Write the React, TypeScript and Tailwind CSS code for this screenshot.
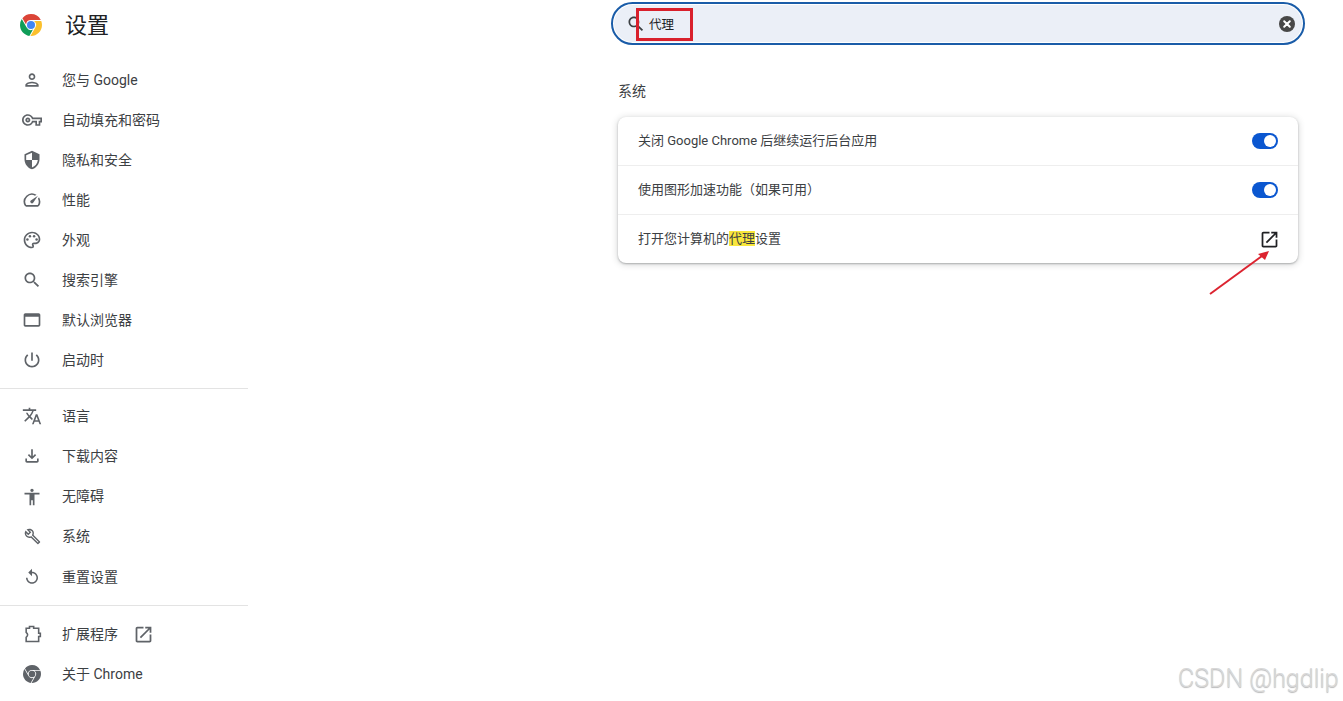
import React from "react";

type NavItem = {
  label: string;
  icon: React.ReactNode;
  external?: boolean;
};

const font = "font-['Roboto','Noto_Sans_CJK_SC',sans-serif]";

const CHROME_RED = "M12 0C8.21 0 4.831 1.757 2.632 4.501l3.953 6.848A5.454 5.454 0 0 1 12 6.545h10.691A12 12 0 0 0 12 0z";
const CHROME_GREEN = "M1.931 5.47A11.943 11.943 0 0 0 0 12c0 6.012 4.42 10.991 10.189 11.864l3.953-6.847a5.45 5.45 0 0 1-6.865-2.29z";
const CHROME_YELLOW = "M15.273 7.636a5.446 5.446 0 0 1 1.45 7.09l.002.001h-.002l-5.344 9.257c.206.01.413.016.621.016 6.627 0 12-5.373 12-12 0-1.54-.29-3.011-.818-4.364z";
const OPEN_NEW = "M19 19H5V5h7V3H5c-1.11 0-2 .9-2 2v14c0 1.1.89 2 2 2h14c1.1 0 2-.9 2-2v-7h-2v7zM14 3v2h3.59l-9.83 9.83 1.41 1.41L19 6.41V10h2V3h-7z";
const SEARCH = "M15.5 14h-.79l-.28-.27C15.41 12.59 16 11.11 16 9.5 16 5.91 13.09 3 9.5 3S3 5.91 3 9.5 5.91 16 9.5 16c1.61 0 3.09-.59 4.23-1.57l.27.28v.79l5 4.99L20.49 19l-4.99-5zm-6 0C7.01 14 5 11.99 5 9.5S7.01 5 9.5 5 14 7.01 14 9.5 11.99 14 9.5 14z";

const Icon = ({ d, className = "w-5 h-5 text-[#5f6368]", children }: { d?: string; className?: string; children?: React.ReactNode }) => (
  <svg viewBox="0 0 24 24" fill="currentColor" className={className}>
    {d && <path d={d} />}
    {children}
  </svg>
);

const topItems: NavItem[] = [
  { label: "您与 Google", icon: <Icon d="M12 6c1.1 0 2 .9 2 2s-.9 2-2 2-2-.9-2-2 .9-2 2-2m0 10c2.7 0 5.8 1.29 6 2H6c.23-.72 3.31-2 6-2m0-12C9.79 4 8 5.79 8 8s1.79 4 4 4 4-1.79 4-4-1.79-4-4-4zm0 10c-2.67 0-8 1.34-8 4v2h16v-2c0-2.66-5.33-4-8-4z" /> },
  { label: "自动填充和密码", icon: <Icon d="M22 19h-6v-4h-2.68c-1.14 2.42-3.6 4-6.32 4-3.86 0-7-3.14-7-7s3.14-7 7-7c2.72 0 5.17 1.58 6.32 4H24v6h-2v4zm-4-2h2v-4h2v-2H11.94l-.23-.67C11.01 8.34 9.11 7 7 7c-2.76 0-5 2.24-5 5s2.24 5 5 5c2.11 0 4.01-1.34 4.71-3.33l.23-.67H18v4zM7 15c-1.65 0-3-1.35-3-3s1.35-3 3-3 3 1.35 3 3-1.35 3-3 3zm0-4c-.55 0-1 .45-1 1s.45 1 1 1 1-.45 1-1-.45-1-1-1z" /> },
  { label: "隐私和安全", icon: <Icon d="M12 1L3 5v6c0 5.55 3.84 10.74 9 12 5.16-1.26 9-6.45 9-12V5l-9-4zm0 10.99h7c-.53 4.12-3.28 7.79-7 8.94V12H5V6.3l7-3.11v8.8z" /> },
  { label: "性能", icon: <Icon d="M20.38 8.57l-1.23 1.85a8 8 0 0 1-.22 7.58H5.07A8 8 0 0 1 15.58 6.85l1.85-1.23A10 10 0 0 0 3.35 19a2 2 0 0 0 1.72 1h13.85a2 2 0 0 0 1.74-1 10 10 0 0 0-.27-10.44zm-9.79 6.84a2 2 0 0 0 2.83 0l5.66-8.49-8.49 5.66a2 2 0 0 0 0 2.83z" /> },
  {
    label: "外观",
    icon: (
      <Icon d="M12 22C6.49 22 2 17.51 2 12S6.49 2 12 2s10 4.04 10 9c0 3.31-2.69 6-6 6h-1.77c-.28 0-.5.22-.5.5 0 .12.05.23.13.33.41.47.64 1.06.64 1.67A2.5 2.5 0 0 1 12 22zm0-18c-4.41 0-8 3.59-8 8s3.59 8 8 8c.28 0 .5-.22.5-.5a.54.54 0 0 0-.14-.35c-.41-.46-.63-1.05-.63-1.65a2.5 2.5 0 0 1 2.5-2.5H16c2.21 0 4-1.79 4-4 0-3.86-3.59-7-8-7z">
        <circle cx="6.5" cy="11.5" r="1.5" />
        <circle cx="9.5" cy="7.5" r="1.5" />
        <circle cx="14.5" cy="7.5" r="1.5" />
        <circle cx="17.5" cy="11.5" r="1.5" />
      </Icon>
    ),
  },
  { label: "搜索引擎", icon: <Icon d={SEARCH} /> },
  { label: "默认浏览器", icon: <Icon d="M20 4H4c-1.11 0-2 .9-2 2v12c0 1.1.89 2 2 2h16c1.1 0 2-.9 2-2V6c0-1.1-.89-2-2-2zm0 14H4V8h16v10z" /> },
  { label: "启动时", icon: <Icon d="M13 3h-2v10h2V3zm4.83 2.17l-1.42 1.42C17.99 7.86 19 9.81 19 12c0 3.87-3.13 7-7 7s-7-3.13-7-7c0-2.19 1.01-4.14 2.58-5.42L6.17 5.17C4.23 6.82 3 9.26 3 12c0 4.97 4.03 9 9 9s9-4.03 9-9c0-2.74-1.23-5.18-3.17-6.83z" /> },
];

const midItems: NavItem[] = [
  { label: "语言", icon: <Icon d="M12.87 15.07l-2.54-2.51.03-.03c1.74-1.94 2.98-4.17 3.71-6.53H17V4h-7V2H8v2H1v1.99h11.17C11.5 7.92 10.44 9.75 9 11.35 8.07 10.32 7.3 9.19 6.69 8h-2c.73 1.63 1.73 3.17 2.98 4.56l-5.09 5.02L4 19l5-5 3.11 3.11.76-2.04zM18.5 10h-2L12 22h2l1.12-3h4.75L21 22h2l-4.5-12zm-2.62 7l1.62-4.33L19.12 17h-3.24z" /> },
  { label: "下载内容", icon: <Icon d="M18 15v3H6v-3H4v3c0 1.1.9 2 2 2h12c1.1 0 2-.9 2-2v-3h-2zm-1-4l-1.41-1.41L13 12.17V4h-2v8.17L8.41 9.59 7 11l5 5 5-5z" /> },
  { label: "无障碍", icon: <Icon d="M12 2c1.1 0 2 .9 2 2s-.9 2-2 2-2-.9-2-2 .9-2 2-2zm9 7h-6v13h-2v-6h-2v6H9V9H3V7h18v2z" /> },
  { label: "系统", icon: <Icon className="w-[17px] h-[17px] text-[#5f6368]" d="M22.61 18.99l-9.08-9.08c.93-2.34.45-5.1-1.44-7C9.79.61 6.21.4 3.66 2.26L7.5 6.11 6.08 7.52 2.25 3.69C.39 6.23.6 9.82 2.9 12.11c1.86 1.86 4.57 2.35 6.89 1.48l9.11 9.11c.39.39 1.02.39 1.41 0l2.3-2.3c.4-.38.4-1.01 0-1.41zm-3 1.6l-9.46-9.46c-.61.45-1.29.72-2 .82-1.36.2-2.79-.21-3.83-1.25C3.37 9.76 2.93 8.5 3 7.26l3.09 3.09 4.24-4.24-3.09-3.09c1.24-.07 2.49.37 3.44 1.31 1.08 1.08 1.49 2.57 1.24 3.96-.12.71-.42 1.37-.88 1.96l9.45 9.45-.88.89z" /> },
  { label: "重置设置", icon: <Icon className="w-[18px] h-[18px] text-[#5f6368]" d="M12 5V1L7 6l5 5V7c3.31 0 6 2.69 6 6s-2.69 6-6 6-6-2.69-6-6H4c0 4.42 3.58 8 8 8s8-3.58 8-8-3.58-8-8-8z" /> },
];

const bottomItems: NavItem[] = [
  {
    label: "扩展程序",
    external: true,
    icon: (
      <svg viewBox="0 0 24 24" fill="none" stroke="currentColor" strokeWidth="1.9" className="w-5 h-5 text-[#5f6368]">
        <path d="M5 5H9V3H14V5H20V11H22V15H20V21H5V16Q8.5 13 5 10Z" />
      </svg>
    ),
  },
  {
    label: "关于 Chrome",
    icon: (
      <Icon className="w-[18px] h-[18px] text-[#5f6368]">
        <path d={CHROME_RED} />
        <path d={CHROME_GREEN} />
        <path d={CHROME_YELLOW} />
        <circle cx="12" cy="12" r="4.4" />
      </Icon>
    ),
  },
];

const NavRow = ({ item, height }: { item: NavItem; height: string }) => (
  <div className={`flex items-center ${height} pl-[22px] text-[14px] text-[#3c4043]`}>
    <span className="flex items-center justify-center w-5 h-5">{item.icon}</span>
    <span className="ml-5">{item.label}</span>
    {item.external && <Icon d={OPEN_NEW} className="w-[21px] h-[21px] ml-[15px] text-[#5f6368]" />}
  </div>
);

const Toggle = () => (
  <div className="flex items-center justify-end w-[26px] h-4 rounded-full bg-[#0b57d0] pr-0.5">
    <div className="w-3 h-3 rounded-full bg-white" />
  </div>
);

const SettingRow = ({ children, last = false }: { children: React.ReactNode; last?: boolean }) => (
  <div className={`flex items-center justify-between pl-5 pr-5 text-[13px] text-[#3c4043] ${last ? "h-12" : "h-[49px] border-b border-[#eeeeee]"}`}>
    {children}
  </div>
);

export default function App() {
  return (
    <div className={`relative flex h-[701px] overflow-hidden bg-white ${font}`}>
      <aside className="w-[248px] shrink-0">
        <div className="flex items-center h-[50px] pl-5">
          <svg viewBox="0 0 24 24" className="w-[22px] h-[22px]">
            <circle cx="12" cy="12" r="12" fill="#fff" />
            <path d={CHROME_RED} fill="#db4437" />
            <path d={CHROME_GREEN} fill="#0f9d58" />
            <path d={CHROME_YELLOW} fill="#fbc02d" />
            <circle cx="12" cy="12" r="4.4" fill="#4285f4" />
          </svg>
          <h1 className="ml-[23px] text-[22px] font-normal text-[#202124]">设置</h1>
        </div>
        <nav className="mt-2.5">
          {topItems.map((item) => (
            <NavRow key={item.label} item={item} height="h-10" />
          ))}
          <div className="mt-2 mb-[7px] h-px bg-[#e3e3e3]" />
          {midItems.map((item) => (
            <NavRow key={item.label} item={item} height="h-[40.25px]" />
          ))}
          <div className="my-2 h-px bg-[#e3e3e3]" />
          {bottomItems.map((item) => (
            <NavRow key={item.label} item={item} height="h-10" />
          ))}
        </nav>
      </aside>

      <main className="ml-[363px] w-[694px] pt-0.5">
        <div className="h-[43px] rounded-full border-2 border-[#1a5ca8] bg-white p-px">
          <div className="flex items-center h-full rounded-full bg-[#ebeff7] pl-3 pr-[7px]">
            <Icon d={SEARCH} className="w-5 h-5 text-[#3c4043]" />
            <span className="ml-[3px] pt-[3px] text-[12.5px] leading-4 text-[#202124]">代理</span>
            <div className="ml-auto flex items-center justify-center w-4 h-4 rounded-full bg-[#474747]">
              <svg viewBox="0 0 16 16" className="w-4 h-4" stroke="#fff" strokeWidth="2" strokeLinecap="round">
                <path d="M5.2 5.2l5.6 5.6M10.8 5.2l-5.6 5.6" />
              </svg>
            </div>
          </div>
        </div>

        <div className="ml-[7px] mr-[7px]">
          <h2 className="mt-9 h-5 text-[14px] font-normal leading-5 text-[#3c4043]">系统</h2>
          <div className="mt-4 rounded-lg bg-white shadow-[0_1px_2px_rgba(60,64,67,0.35),0_1px_6px_1px_rgba(60,64,67,0.18)]">
            <SettingRow>
              <span>关闭 Google Chrome 后继续运行后台应用</span>
              <Toggle />
            </SettingRow>
            <SettingRow>
              <span>使用图形加速功能（如果可用）</span>
              <Toggle />
            </SettingRow>
            <SettingRow last>
              <span>
                打开您计算机的<span className="bg-[#f8e63c]">代理</span>设置
              </span>
              <Icon d={OPEN_NEW} className="w-[21px] h-[21px] -mr-0.5 text-[#202124]" />
            </SettingRow>
          </div>
        </div>
      </main>

      {/* annotations drawn over the screenshot */}
      <div className="absolute left-[636px] top-2 w-[57px] h-[33px] border-[3px] border-[#d9202c]" />
      <svg className="absolute left-[1200px] top-[240px] w-[80px] h-[64px]" viewBox="0 0 80 64" fill="none">
        <path d="M10 54L62 16" stroke="#dc2430" strokeWidth="2" />
        <path d="M69 11L58 14L65 20Z" fill="#dc2430" />
      </svg>
      <div className="absolute left-[1178px] top-[662px] font-['Roboto',sans-serif] font-light text-[25px] leading-[34px] whitespace-nowrap text-[#d8d8d8] [text-shadow:0_1px_1px_#b8b8b8]">
        CSDN @hgdlip
      </div>
    </div>
  );
}
